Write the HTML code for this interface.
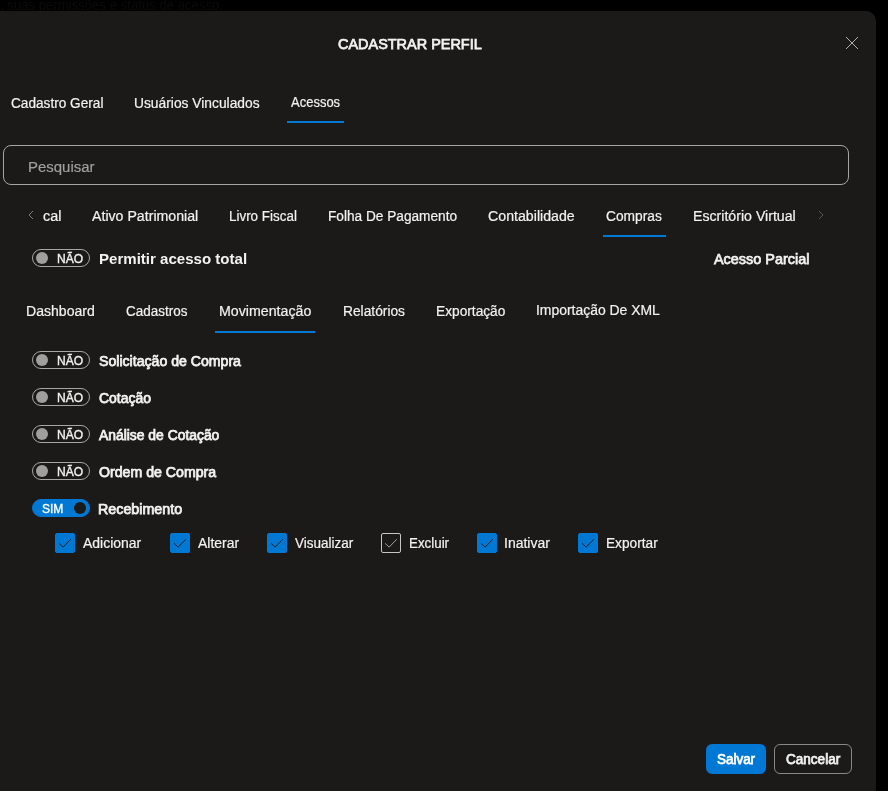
<!DOCTYPE html>
<html lang="pt-BR"><head><meta charset="utf-8"><title>Cadastrar Perfil</title>
<style>
html,body{margin:0;padding:0;background:#000;}
body{width:888px;height:791px;position:relative;overflow:hidden;font-family:"Liberation Sans",sans-serif;}
.panel{position:absolute;left:0;top:11px;width:876px;height:788px;background:#1b1a19;border-radius:0 10px 10px 0;}
.t{position:absolute;white-space:nowrap;line-height:1;transform-origin:0 0;}
.ul{position:absolute;height:2px;background:#0078d4;}
.search{position:absolute;left:3px;top:145px;width:844px;height:38px;border:1px solid #a6a5a4;border-radius:8px;}
.tg{position:absolute;left:32px;width:56px;height:16px;border-radius:9px;border:1px solid #a8a6a4;}
.tg i{position:absolute;width:12px;height:12px;border-radius:50%;top:2px;}
.tg.off i{left:3px;background:#a19f9d;}
.tg.on{background:#0078d4;border-color:#0078d4;}
.tg.on i{left:41px;background:#1b1a19;}
.cb{position:absolute;top:533px;width:18px;height:18px;border:1px solid #c8c6c4;border-radius:2px;}
.cb.on{background:#0078d4;border-color:#0078d4;}
.cb svg{position:absolute;left:-1px;top:-1px;}
.btn{position:absolute;top:744px;height:30px;border-radius:6px;box-sizing:border-box;}
.ic{position:absolute;}
.tl{position:absolute;left:0;top:0;width:888px;height:791px;will-change:transform;}
</style></head><body>
<div class="tl"><span class="t" style="left:-0.12px;top:-2px;color:#0b0b0b;font-size:14px;-webkit-text-stroke:0.2px currentColor;transform:scaleX(0.9397)">, suas permissões e status de acesso.</span></div>
<div class="panel"></div>
<svg class="ic" style="left:845px;top:36px" width="14" height="14" viewBox="0 0 14 14"><path d="M1 1 L13 13 M13 1 L1 13" stroke="#b3b0ad" stroke-width="1" fill="none"/></svg>
<div class="ul" style="left:287px;top:121px;width:57px"></div>
<div class="search"></div>
<svg class="ic" style="left:27px;top:209px" width="8" height="12" viewBox="0 0 8 12"><path d="M6 2 L2 6 L6 10" stroke="#807e7c" stroke-width="1" fill="none"/></svg>
<svg class="ic" style="left:817px;top:209px" width="8" height="12" viewBox="0 0 8 12"><path d="M2 2 L6 6 L2 10" stroke="#575553" stroke-width="1" fill="none"/></svg>
<div class="ul" style="left:603px;top:235px;width:63px"></div>
<div class="ul" style="left:215px;top:331px;width:100px"></div>
<div class="tg off" style="top:249px"><i></i></div>
<div class="tg off" style="top:351px"><i></i></div>
<div class="tg off" style="top:388px"><i></i></div>
<div class="tg off" style="top:425px"><i></i></div>
<div class="tg off" style="top:462px"><i></i></div>
<div class="tg on" style="top:499px"><i></i></div>
<div class="cb on" style="left:55px"><svg width="20" height="20" viewBox="0 0 20 20"><path d="M4.1 10.4 L8.2 14.1 L15.8 6.2" fill="none" stroke="#1b1a19" stroke-width="1"/></svg></div>
<div class="cb on" style="left:170px"><svg width="20" height="20" viewBox="0 0 20 20"><path d="M4.1 10.4 L8.2 14.1 L15.8 6.2" fill="none" stroke="#1b1a19" stroke-width="1"/></svg></div>
<div class="cb on" style="left:267px"><svg width="20" height="20" viewBox="0 0 20 20"><path d="M4.1 10.4 L8.2 14.1 L15.8 6.2" fill="none" stroke="#1b1a19" stroke-width="1"/></svg></div>
<div class="cb" style="left:381px"><svg width="20" height="20" viewBox="0 0 20 20"><path d="M4.1 10.4 L8.2 14.1 L15.8 6.2" fill="none" stroke="#a19f9d" stroke-width="1"/></svg></div>
<div class="cb on" style="left:477px"><svg width="20" height="20" viewBox="0 0 20 20"><path d="M4.1 10.4 L8.2 14.1 L15.8 6.2" fill="none" stroke="#1b1a19" stroke-width="1"/></svg></div>
<div class="cb on" style="left:578px"><svg width="20" height="20" viewBox="0 0 20 20"><path d="M4.1 10.4 L8.2 14.1 L15.8 6.2" fill="none" stroke="#1b1a19" stroke-width="1"/></svg></div>
<div class="btn" style="left:706px;width:60px;background:#0078d4"></div>
<div class="btn" style="left:774px;width:78px;border:1px solid #8a8886"></div>
<div class="tl">
<span class="t" style="left:338.11px;top:36px;color:#f3f2f1;font-size:15px;-webkit-text-stroke:0.75px currentColor;transform:scaleX(0.9633)">CADASTRAR PERFIL</span>
<span class="t" style="left:11.49px;top:96px;color:#f3f2f1;font-size:14px;-webkit-text-stroke:0.2px currentColor;transform:scaleX(0.9741)">Cadastro Geral</span>
<span class="t" style="left:133.96px;top:96px;color:#f3f2f1;font-size:14px;-webkit-text-stroke:0.2px currentColor;transform:scaleX(0.9861)">Usuários Vinculados</span>
<span class="t" style="left:291.17px;top:95px;color:#f3f2f1;font-size:14px;-webkit-text-stroke:0.2px currentColor;transform:scaleX(0.9279)">Acessos</span>
<span class="t" style="left:27.57px;top:159px;color:#a19f9d;font-size:15.5px;-webkit-text-stroke:0.2px currentColor;transform:scaleX(0.9659)">Pesquisar</span>
<span class="t" style="left:42.55px;top:209px;color:#f3f2f1;font-size:14px;-webkit-text-stroke:0.2px currentColor;transform:scaleX(1.0297)">cal</span>
<span class="t" style="left:91.86px;top:209px;color:#f3f2f1;font-size:14px;-webkit-text-stroke:0.2px currentColor;transform:scaleX(1.0117)">Ativo Patrimonial</span>
<span class="t" style="left:228.95px;top:209px;color:#f3f2f1;font-size:14px;-webkit-text-stroke:0.2px currentColor;transform:scaleX(0.9586)">Livro Fiscal</span>
<span class="t" style="left:327.93px;top:209px;color:#f3f2f1;font-size:14px;-webkit-text-stroke:0.2px currentColor;transform:scaleX(0.9757)">Folha De Pagamento</span>
<span class="t" style="left:488.47px;top:209px;color:#f3f2f1;font-size:14px;-webkit-text-stroke:0.2px currentColor;transform:scaleX(1.0131)">Contabilidade</span>
<span class="t" style="left:606.48px;top:209px;color:#f3f2f1;font-size:14px;-webkit-text-stroke:0.2px currentColor;transform:scaleX(0.9838)">Compras</span>
<span class="t" style="left:692.89px;top:209px;color:#f3f2f1;font-size:14px;-webkit-text-stroke:0.2px currentColor;transform:scaleX(1.0106)">Escritório Virtual</span>
<span class="t" style="left:98.80px;top:251px;color:#f3f2f1;font-size:15px;font-weight:700;transform:scaleX(1.0037)">Permitir acesso total</span>
<span class="t" style="left:713.86px;top:251px;color:#f3f2f1;font-size:15px;-webkit-text-stroke:0.75px currentColor;transform:scaleX(0.9611)">Acesso Parcial</span>
<span class="t" style="left:26.40px;top:304px;color:#f3f2f1;font-size:14px;-webkit-text-stroke:0.2px currentColor;transform:scaleX(1.0054)">Dashboard</span>
<span class="t" style="left:125.99px;top:304px;color:#f3f2f1;font-size:14px;-webkit-text-stroke:0.2px currentColor;transform:scaleX(0.9618)">Cadastros</span>
<span class="t" style="left:218.89px;top:304px;color:#f3f2f1;font-size:14px;-webkit-text-stroke:0.2px currentColor;transform:scaleX(1.0140)">Movimentação</span>
<span class="t" style="left:342.67px;top:304px;color:#f3f2f1;font-size:14px;-webkit-text-stroke:0.2px currentColor;transform:scaleX(0.9833)">Relatórios</span>
<span class="t" style="left:435.72px;top:304px;color:#f3f2f1;font-size:14px;-webkit-text-stroke:0.2px currentColor;transform:scaleX(0.9795)">Exportação</span>
<span class="t" style="left:535.91px;top:303px;color:#f3f2f1;font-size:14px;-webkit-text-stroke:0.2px currentColor;transform:scaleX(0.9949)">Importação De XML</span>
<span class="t" style="left:98.70px;top:354px;color:#f3f2f1;font-size:14px;-webkit-text-stroke:0.75px currentColor;transform:scaleX(1.0077)">Solicitação de Compra</span>
<span class="t" style="left:98.76px;top:391px;color:#f3f2f1;font-size:14px;-webkit-text-stroke:0.75px currentColor;transform:scaleX(0.9972)">Cotação</span>
<span class="t" style="left:99.27px;top:428px;color:#f3f2f1;font-size:14px;-webkit-text-stroke:0.75px currentColor;transform:scaleX(0.9910)">Análise de Cotação</span>
<span class="t" style="left:98.81px;top:465px;color:#f3f2f1;font-size:14px;-webkit-text-stroke:0.75px currentColor;transform:scaleX(1.0103)">Ordem de Compra</span>
<span class="t" style="left:98.26px;top:502px;color:#f3f2f1;font-size:14px;-webkit-text-stroke:0.75px currentColor;transform:scaleX(1.0196)">Recebimento</span>
<span class="t" style="left:57.16px;top:253px;color:#f3f2f1;font-size:12px;-webkit-text-stroke:0.35px currentColor;transform:scaleX(1.0040)">NÃO</span>
<span class="t" style="left:57.16px;top:355px;color:#f3f2f1;font-size:12px;-webkit-text-stroke:0.35px currentColor;transform:scaleX(1.0040)">NÃO</span>
<span class="t" style="left:57.16px;top:392px;color:#f3f2f1;font-size:12px;-webkit-text-stroke:0.35px currentColor;transform:scaleX(1.0040)">NÃO</span>
<span class="t" style="left:57.16px;top:429px;color:#f3f2f1;font-size:12px;-webkit-text-stroke:0.35px currentColor;transform:scaleX(1.0040)">NÃO</span>
<span class="t" style="left:57.16px;top:466px;color:#f3f2f1;font-size:12px;-webkit-text-stroke:0.35px currentColor;transform:scaleX(1.0040)">NÃO</span>
<span class="t" style="left:42.22px;top:503px;color:#ffffff;font-size:12px;-webkit-text-stroke:0.35px currentColor;transform:scaleX(1.0032)">SIM</span>
<span class="t" style="left:83.36px;top:536px;color:#f3f2f1;font-size:14px;-webkit-text-stroke:0.2px currentColor;transform:scaleX(0.9969)">Adicionar</span>
<span class="t" style="left:197.66px;top:536px;color:#f3f2f1;font-size:14px;-webkit-text-stroke:0.2px currentColor;transform:scaleX(0.9949)">Alterar</span>
<span class="t" style="left:294.94px;top:536px;color:#f3f2f1;font-size:14px;-webkit-text-stroke:0.2px currentColor;transform:scaleX(0.9641)">Visualizar</span>
<span class="t" style="left:408.95px;top:536px;color:#f3f2f1;font-size:14px;-webkit-text-stroke:0.2px currentColor;transform:scaleX(0.9533)">Excluir</span>
<span class="t" style="left:503.91px;top:536px;color:#f3f2f1;font-size:14px;-webkit-text-stroke:0.2px currentColor;transform:scaleX(0.9998)">Inativar</span>
<span class="t" style="left:606.23px;top:536px;color:#f3f2f1;font-size:14px;-webkit-text-stroke:0.2px currentColor;transform:scaleX(0.9768)">Exportar</span>
<span class="t" style="left:716.71px;top:752px;color:#ffffff;font-size:14px;-webkit-text-stroke:0.75px currentColor;transform:scaleX(0.9593)">Salvar</span>
<span class="t" style="left:785.57px;top:752px;color:#f3f2f1;font-size:14px;-webkit-text-stroke:0.75px currentColor;transform:scaleX(0.9669)">Cancelar</span>
</div>
</body></html>
